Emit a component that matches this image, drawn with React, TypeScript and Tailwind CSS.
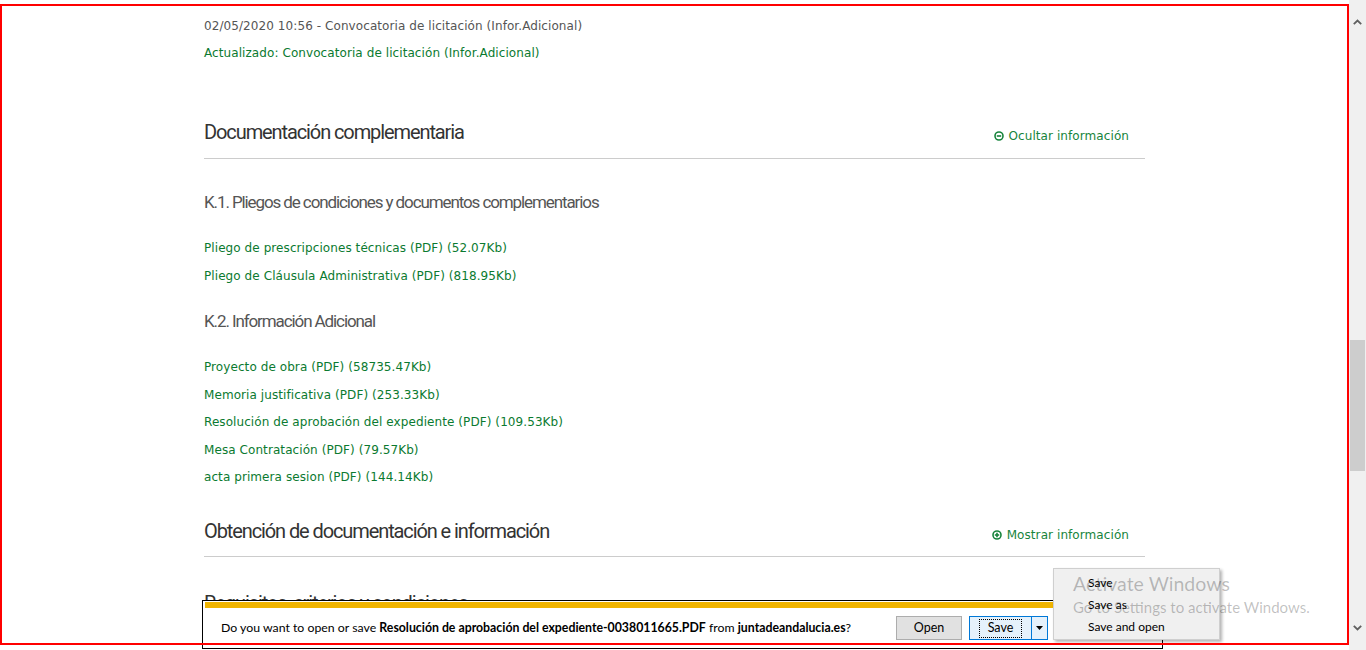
const k1Docs = [
  "Pliego de prescripciones técnicas (PDF) (52.07Kb)",
  "Pliego de Cláusula Administrativa (PDF) (818.95Kb)",
]

const k2Docs = [
  "Proyecto de obra (PDF) (58735.47Kb)",
  "Memoria justificativa (PDF) (253.33Kb)",
  "Resolución de aprobación del expediente (PDF) (109.53Kb)",
  "Mesa Contratación (PDF) (79.57Kb)",
  "acta primera sesion (PDF) (144.14Kb)",
]

function CircleIcon({ plus }: { plus?: boolean }) {
  return (
    <svg width="10" height="10" viewBox="0 0 10 10" className="shrink-0">
      <circle cx="5" cy="5" r="4" fill="none" stroke="currentColor" strokeWidth="1.6" />
      <path d="M2.8 5h4.4" stroke="currentColor" strokeWidth="1.6" />
      {plus && <path d="M5 2.8v4.4" stroke="currentColor" strokeWidth="1.6" />}
    </svg>
  )
}

function SectionHeader({ title, open, className }: { title: string; open?: boolean; className?: string }) {
  return (
    <div className={`flex items-start justify-between border-b border-[#cccccc] ${className ?? ""}`}>
      <h2 className="font-['Roboto',sans-serif] text-[20px] leading-[28px] tracking-[-1.1px] text-[#333333]">{title}</h2>
      <a className="mt-[8px] mr-[16px] flex items-center gap-[5px] text-[12px] leading-[20px] text-[#17843c]">
        <CircleIcon plus={!open} />
        <span>{open ? "Ocultar información" : "Mostrar información"}</span>
      </a>
    </div>
  )
}

function SubHeading({ children, className }: { children: string; className?: string }) {
  return (
    <h3 className={`font-['Roboto',sans-serif] text-[17px] leading-[24px] tracking-[-1.1px] text-[#555555] ${className ?? ""}`}>
      {children}
    </h3>
  )
}

function Chevron({ down }: { down?: boolean }) {
  return (
    <svg width="9" height="6" viewBox="0 0 9 6" className={down ? "rotate-180" : ""}>
      <path d="M0.8 5.2 4.5 1.5 8.2 5.2" fill="none" stroke="#606060" strokeWidth="1.8" />
    </svg>
  )
}

export default function App() {
  return (
    <div className="relative flex h-[650px] w-[1366px] overflow-hidden bg-white font-['DejaVu_Sans',sans-serif]">
      <main className="h-full flex-1 overflow-hidden">
        <div className="ml-[204px] w-[941px] pt-[13px] text-[12px] tracking-[0.08px]">
          <p className="leading-[27px] text-[#555555]">02/05/2020 10:56 - Convocatoria de licitación (Infor.Adicional)</p>
          <p className="leading-[27px] text-[#0b7a30]">Actualizado: Convocatoria de licitación (Infor.Adicional)</p>

          <SectionHeader title="Documentación complementaria" open className="mt-[51px] pb-[12px]" />

          <SubHeading className="mt-[31px]">K.1. Pliegos de condiciones y documentos complementarios</SubHeading>
          <ul className="mt-[20px]">
            {k1Docs.map((d) => (
              <li key={d} className="leading-[28px] text-[#0b7a30]">{d}</li>
            ))}
          </ul>

          <SubHeading className="mt-[19px]">K.2. Información Adicional</SubHeading>
          <ul className="mt-[21px]">
            {k2Docs.map((d) => (
              <li key={d} className="leading-[27.5px] text-[#0b7a30]">{d}</li>
            ))}
          </ul>

          <SectionHeader title="Obtención de documentación e información" className="mt-[25px] pb-[11px]" />
          <SectionHeader title="Requisitos, criterios y condiciones" className="mt-[32px] pb-[11px]" />
        </div>
      </main>

      <div className="flex h-full w-[17px] flex-col items-center bg-[#f0f0f0]">
        <div className="mt-[19px]"><Chevron /></div>
        <div className="mt-[315px] h-[131px] w-[15px] bg-[#cdcdcd]" />
        <div className="mt-[154px]"><Chevron down /></div>
      </div>

      {/* download notification bar */}
      <div className="absolute left-[202px] top-[600px] flex h-[49px] w-[961px] flex-col border border-black bg-white px-[2px] pt-[1px] font-['Lato',sans-serif] text-black">
        <div className="h-[6px] bg-[#f0b400]" />
        <div className="flex flex-1 items-center pl-[16px] pr-[112px]">
          <p className="text-[12.3px]">
            Do you want to open or save <b>Resolución de aprobación del expediente-0038011665.PDF</b> from{" "}
            <b>juntadeandalucia.es</b>?
          </p>
          <div className="ml-auto flex items-center gap-[7px] text-[12.5px]">
            <button className="h-[24px] w-[66px] border border-[#adadad] bg-[#e1e1e1]">Open</button>
            <div className="flex h-[24px] w-[79px] border border-[#0078d7] bg-[#e5f1fb]">
              <div className="flex w-[61px] items-center justify-center">
                <span className="flex h-[19px] w-[43px] items-center justify-center border border-dotted border-black">
                  Save
                </span>
              </div>
              <div className="flex flex-1 items-center justify-center border-l border-[#0078d7]">
                <svg width="7" height="4" viewBox="0 0 7 4">
                  <path d="M0 0h7L3.5 4z" fill="#000" />
                </svg>
              </div>
            </div>
          </div>
        </div>
      </div>

      {/* split button menu */}
      <div className="absolute left-[1053px] top-[568px] h-[72px] w-[167px] border border-[#cfcfcf] bg-[#f0f0f0] pl-[34px] pt-[3px] font-['Lato',sans-serif] text-[12px] leading-[22px] text-black shadow-[2px_2px_3px_rgba(0,0,0,0.3)]">
        <div>Save</div>
        <div>Save as</div>
        <div>Save and open</div>
      </div>

      {/* windows watermark */}
      <div className="pointer-events-none absolute left-[1073px] top-[572px] font-['Lato',sans-serif] text-black/25">
        <div className="text-[19.5px] leading-[24px]">Activate Windows</div>
        <div className="mt-[2px] text-[15px] leading-[18px]">Go to Settings to activate Windows.</div>
      </div>

      {/* annotation frame */}
      <div className="pointer-events-none absolute left-0 top-[4px] h-[641px] w-[1349px] border-2 border-[#ff0000]" />
    </div>
  )
}
